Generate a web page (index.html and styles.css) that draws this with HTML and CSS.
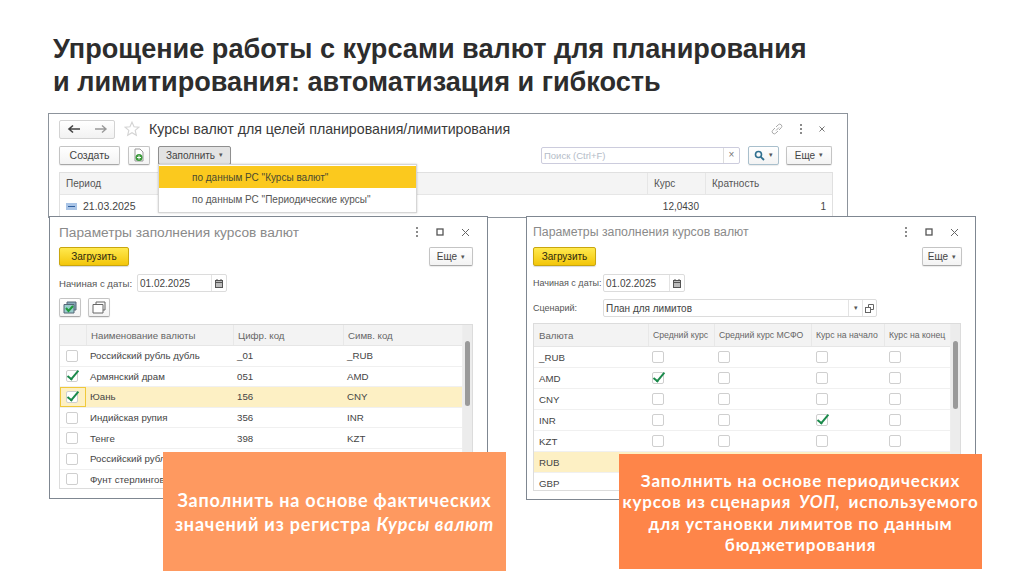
FILE: index.html
```html
<!DOCTYPE html>
<html lang="ru">
<head>
<meta charset="utf-8">
<title>Курсы валют</title>
<link rel="stylesheet" href="styles.css">
</head>
<body>
<div class="slide">
  <h1 class="heading">Упрощение работы с курсами валют для планирования<br>и лимитирования: автоматизация и гибкость</h1>

  <section class="win win-main">
    <div class="main-top">
      <div class="nav">
        <svg width="14" height="10" viewBox="0 0 14 10"><path d="M13 5H3M6 1.500 2 5l4 3.500" fill="none" stroke="#444" stroke-width="1.600"/></svg>
        <svg width="14" height="10" viewBox="0 0 14 10"><path d="M1 5h10M8 1.500 12 5 8 8.500" fill="none" stroke="#999" stroke-width="1.400"/></svg>
      </div>
      <svg class="star" width="16" height="16" viewBox="0 0 14 14"><path d="M7 1l1.800 4 4.200.4-3.200 2.800 1 4.300L7 10.200 3.200 12.500l1-4.300L1 5.400l4.200-.4z" fill="#fff" stroke="#d4d4d4"/></svg>
      <div class="main-title">Курсы валют для целей планирования/лимитирования</div>
      <div class="win-icons">
        <svg width="14" height="14" viewBox="0 0 14 14"><path d="M6 8.500 9 5.500M5 6 2.800 8.200a2 2 0 0 0 3 3L8 9M6 5l2.200-2.200a2 2 0 0 1 3 3L9 8" fill="none" stroke="#aaa"/></svg>
        <svg width="4" height="12" viewBox="0 0 4 12"><path d="M2 1v2M2 5v2M2 9v2" stroke="#666" stroke-width="1.500"/></svg>
        <svg width="8" height="8" viewBox="0 0 8 8"><path d="M1.500 1.500l5 5M6.500 1.500l-5 5" stroke="#777"/></svg>
      </div>
    </div>
    <div class="main-actions">
      <button class="btn btn-create">Создать</button>
      <button class="btn btn-file">
        <svg width="12" height="14" viewBox="0 0 12 14"><path d="M2 1h5l3 3v9H2z" fill="#fff" stroke="#999"/><circle cx="6" cy="9.500" r="3.500" fill="#3c9a3c"/><path d="M6 7.500v4M4 9.500h4" stroke="#fff"/></svg>
      </button>
      <button class="btn btn-fill">Заполнить <span class="caret">▾</span></button>
      <div class="search">
        <span class="search-text">Поиск (Ctrl+F)</span>
        <span class="search-x">×</span>
      </div>
      <button class="btn btn-find">
        <svg width="11" height="11" viewBox="0 0 11 11"><circle cx="4.500" cy="4.500" r="3" fill="none" stroke="#2f6f8f" stroke-width="1.600"/><path d="M6.800 6.800 10 10" stroke="#2f6f8f" stroke-width="1.800"/></svg>
        <span class="caret">▾</span>
      </button>
      <button class="btn btn-more-main">Еще <span class="caret">▾</span></button>
    </div>
    <div class="main-table">
      <div class="main-row main-head">
        <span class="cell cell-period">Период</span>
        <span class="cell cell-rate">Курс</span>
        <span class="cell cell-mult">Кратность</span>
      </div>
      <div class="main-row main-data">
        <span class="cell cell-period">
          <svg width="11" height="7" viewBox="0 0 11 7"><rect width="11" height="7" fill="#a9c4e6"/><path d="M2 3.500h7" stroke="#2d5d9e"/></svg>
          <span class="period-date">21.03.2025</span>
        </span>
        <span class="cell cell-rate num">12,0430</span>
        <span class="cell cell-mult num">1</span>
      </div>
    </div>
  </section>

  <div class="menu">
    <div class="menu-item menu-active">по данным РС "Курсы валют"</div>
    <div class="menu-item">по данным РС "Периодические курсы"</div>
  </div>

  <section class="win win-left">
    <div class="dlg-head">
      <span class="dlg-title dlg-title-l">Параметры заполнения курсов валют</span>
      <span class="dlg-icons">
        <svg width="4" height="10" viewBox="0 0 4 10"><path d="M2 0v2M2 4v2M2 8v2" stroke="#666" stroke-width="1.500"/></svg>
        <svg width="8" height="8" viewBox="0 0 8 8"><rect x="1" y="1" width="6" height="6" fill="none" stroke="#555" stroke-width="1.300"/></svg>
        <svg width="9" height="9" viewBox="0 0 9 9"><path d="M1 1l7 7M8 1 1 8" stroke="#666"/></svg>
      </span>
    </div>
    <div class="dlg-bar">
      <button class="btn-load btn-load-l">Загрузить</button>
      <button class="btn btn-more btn-more-l">Еще <span class="caret">▾</span></button>
    </div>
    <div class="field-row">
      <span class="label label-l">Начиная с даты:</span>
      <span class="date date-l"><span class="date-val">01.02.2025</span><span class="date-ico"><svg width="8" height="9" viewBox="0 0 8 9"><rect x=".5" y="1.500" width="7" height="7" fill="#bbb" stroke="#555"/><path d="M.5 3.500h7M2 0v2M6 0v2" stroke="#555"/></svg></span></span>
    </div>
    <div class="tool-row">
      <button class="btn btn-sq"><svg width="14" height="13" viewBox="0 0 14 13"><path d="M4 1h9v8H4z" fill="#8ab" stroke="#567"/><path d="M1 3.500h10v8.500H1z" fill="#9cc" stroke="#567"/><path d="M3 7l2.500 3L10 5" fill="none" stroke="#1d9a3c" stroke-width="2"/></svg></button>
      <button class="btn btn-sq"><svg width="14" height="13" viewBox="0 0 14 13"><path d="M4 3V1h9v8h-2" fill="none" stroke="#666"/><path d="M1 3.500h10V12H1z" fill="#fff" stroke="#666"/></svg></button>
    </div>
    <div class="tbl tbl-l">
      <div class="tbl-body">
        <div class="row-l row-head"><span class="th"></span><span class="th">Наименование валюты</span><span class="th">Цифр. код</span><span class="th">Симв. код</span></div>
        <div class="row-l"><span class="cb-cell"><i class="cb"></i></span><span>Российский рубль дубль</span><span>_01</span><span>_RUB</span></div>
        <div class="row-l"><span class="cb-cell"><i class="cb on"></i></span><span>Армянский драм</span><span>051</span><span>AMD</span></div>
        <div class="row-l row-sel"><span class="cb-cell cb-focus"><i class="cb on"></i></span><span>Юань</span><span>156</span><span>CNY</span></div>
        <div class="row-l"><span class="cb-cell"><i class="cb"></i></span><span>Индийская рупия</span><span>356</span><span>INR</span></div>
        <div class="row-l"><span class="cb-cell"><i class="cb"></i></span><span>Тенге</span><span>398</span><span>KZT</span></div>
        <div class="row-l"><span class="cb-cell"><i class="cb"></i></span><span>Российский рубль</span></div>
        <div class="row-l"><span class="cb-cell"><i class="cb"></i></span><span>Фунт стерлингов</span></div>
      </div>
      <div class="scroll"><i class="thumb"></i></div>
    </div>
  </section>

  <section class="win win-right">
    <div class="dlg-head">
      <span class="dlg-title dlg-title-r">Параметры заполнения курсов валют</span>
      <span class="dlg-icons">
        <svg width="4" height="10" viewBox="0 0 4 10"><path d="M2 0v2M2 4v2M2 8v2" stroke="#666" stroke-width="1.500"/></svg>
        <svg width="8" height="8" viewBox="0 0 8 8"><rect x="1" y="1" width="6" height="6" fill="none" stroke="#555" stroke-width="1.300"/></svg>
        <svg width="9" height="9" viewBox="0 0 9 9"><path d="M1 1l7 7M8 1 1 8" stroke="#666"/></svg>
      </span>
    </div>
    <div class="dlg-bar">
      <button class="btn-load btn-load-r">Загрузить</button>
      <button class="btn btn-more btn-more-r">Еще <span class="caret">▾</span></button>
    </div>
    <div class="field-row">
      <span class="label label-r">Начиная с даты:</span>
      <span class="date date-r"><span class="date-val">01.02.2025</span><span class="date-ico"><svg width="8" height="9" viewBox="0 0 8 9"><rect x=".5" y="1.500" width="7" height="7" fill="#bbb" stroke="#555"/><path d="M.5 3.500h7M2 0v2M6 0v2" stroke="#555"/></svg></span></span>
    </div>
    <div class="field-row field-scen">
      <span class="label label-r">Сценарий:</span>
      <span class="scen"><span class="scen-val">План для лимитов</span><span class="scen-btn"><span class="caret">▾</span></span><span class="scen-btn"><svg width="9" height="9" viewBox="0 0 9 9"><path d="M3.500 3V.5h5v5H6" fill="none" stroke="#666"/><rect x=".5" y="3.500" width="5" height="5" fill="none" stroke="#666"/></svg></span></span>
    </div>
    <div class="tbl tbl-r">
      <div class="tbl-body">
        <div class="row-r row-head"><span class="th">Валюта</span><span class="th th-mid">Средний курс</span><span class="th th-mid">Средний курс МСФО</span><span class="th th-mid">Курс на начало</span><span class="th th-mid">Курс на конец</span></div>
        <div class="row-r"><span>_RUB</span><span class="c1"><i class="cb"></i></span><span class="c1"><i class="cb"></i></span><span class="c1"><i class="cb"></i></span><span class="c1"><i class="cb"></i></span></div>
        <div class="row-r"><span>AMD</span><span class="c1"><i class="cb on"></i></span><span class="c1"><i class="cb"></i></span><span class="c1"><i class="cb"></i></span><span class="c1"><i class="cb"></i></span></div>
        <div class="row-r"><span>CNY</span><span class="c1"><i class="cb"></i></span><span class="c1"><i class="cb"></i></span><span class="c1"><i class="cb"></i></span><span class="c1"><i class="cb"></i></span></div>
        <div class="row-r"><span>INR</span><span class="c1"><i class="cb"></i></span><span class="c1"><i class="cb"></i></span><span class="c1"><i class="cb on"></i></span><span class="c1"><i class="cb"></i></span></div>
        <div class="row-r"><span>KZT</span><span class="c1"><i class="cb"></i></span><span class="c1"><i class="cb"></i></span><span class="c1"><i class="cb"></i></span><span class="c1"><i class="cb"></i></span></div>
        <div class="row-r row-sel"><span>RUB</span></div>
        <div class="row-r"><span>GBP</span></div>
      </div>
      <div class="scroll"><i class="thumb thumb-r"></i></div>
    </div>
  </section>

  <aside class="note note-left"><p class="note-text">Заполнить на основе фактических<br>значений из регистра <em>Курсы валют</em></p></aside>
  <aside class="note note-right"><p class="note-text">Заполнить на основе периодических<br>курсов из сценария <em>УОП,</em> используемого<br>для установки лимитов по данным<br>бюджетирования</p></aside>
</div>
</body>
</html>
```

FILE: styles.css
```css
* { box-sizing: border-box; }
html, body { margin: 0; padding: 0; background: #fff; }
body { font-family: "Liberation Sans", Arial, sans-serif; color: #3c3c3c; }
button { font-family: inherit; margin: 0; padding: 0; }
i { display: block; }
.slide { position: relative; width: 1024px; height: 574px; overflow: hidden; background: #fff; }

.heading { position: absolute; left: 53px; top: 32px; margin: 0; font-size: 27.100px; line-height: 33px; font-weight: 700; color: #2d2d2d; white-space: nowrap; }

.win { position: absolute; background: #fff; border: 1.500px solid #7f8791; display: flex; flex-direction: column; }
.win-main { left: 48px; top: 113px; width: 800px; height: 105px; padding: 5px 15px 0 10px; border-color: #8d949c; overflow: hidden; }
.win-left { left: 49px; top: 216px; width: 439px; height: 283px; padding: 0 14px 0 9px; }
.win-right { left: 526px; top: 216px; width: 450px; height: 284px; padding: 0 13px 0 6px; }

.btn { display: flex; align-items: center; justify-content: center; gap: 4px; height: 19px; background: linear-gradient(#fff, #f3f3f3); border: 1px solid #c4c4c4; border-bottom-color: #a8a8a8; border-radius: 2px; font-size: 10px; color: #444; box-shadow: 0 1px 1px rgba(0,0,0,.08); }
.caret { font-size: 7px; color: #555; }

.main-top { display: flex; align-items: center; height: 20px; }
.nav { display: flex; align-items: center; justify-content: space-around; width: 56px; height: 19px; background: linear-gradient(#fff, #f2f2f2); border: 1px solid #d3d3d3; border-radius: 2px; }
.star { margin-left: 9px; }
.main-title { margin-left: 9px; font-size: 14.200px; color: #3a3a3a; }
.win-icons { margin-left: auto; display: flex; align-items: center; gap: 15px; padding-right: 6px; }

.main-actions { display: flex; align-items: center; margin-top: 6px; height: 20px; }
.btn-create { width: 61px; font-size: 10.500px; }
.btn-file { width: 22px; margin-left: 8px; }
.btn-fill { width: 73px; margin-left: 8px; background: #e3e3e3; border: 1.500px solid #8f8f8f; }
.search { display: flex; align-items: center; justify-content: space-between; width: 199px; height: 17px; margin-left: 310px; border: 1px solid #ccd; border-radius: 2px; padding-left: 2px; }
.search-text { font-size: 9.500px; color: #b4bcc8; }
.search-x { width: 16px; height: 100%; border-left: 1px solid #ddd; text-align: center; font-size: 10px; color: #777; line-height: 14px; }
.btn-find { width: 31px; margin-left: 8px; border-color: #a9bfcc; }
.btn-more-main { width: 46px; margin-left: 7px; }

.main-table { margin-top: 7px; width: 774px; border: 1px solid #e0e0e0; border-bottom: 0; font-size: 10px; }
.main-row { display: grid; grid-template-columns: 587px 58px 1fr; align-items: center; }
.main-head { height: 22px; background: #f4f4f4; border-bottom: 1px solid #e6e6e6; color: #555; }
.main-data { height: 22px; color: #444; }
.cell { padding: 0 6px; }
.main-head .cell-rate, .main-head .cell-mult { border-left: 1px solid #e6e6e6; height: 100%; display: flex; align-items: center; }
.cell-period { display: flex; align-items: center; gap: 6px; }
.period-date { font-size: 10.500px; }
.num { text-align: right; }

.menu { position: absolute; left: 158px; top: 164px; width: 259px; height: 49px; background: #fff; border: 1px solid #d6d6d6; box-shadow: 0 0 2px rgba(0,0,0,.2); font-size: 10px; color: #555; padding-top: 1px; }
.menu-item { height: 23px; padding-left: 33px; display: flex; align-items: center; }
.menu-active { background: #fbc91e; color: #4a4a30; height: 22px; }

.dlg-head { display: flex; align-items: center; justify-content: space-between; height: 30px; }
.dlg-title { color: #8a8a8a; white-space: nowrap; }
.dlg-title-l { font-size: 13.700px; }
.dlg-title-r { font-size: 12.300px; }
.dlg-icons { display: flex; align-items: center; gap: 17px; padding-right: 3px; }
.dlg-bar { display: flex; justify-content: space-between; align-items: center; height: 19px; }
.btn-load { height: 19px; background: linear-gradient(#ffe94e, #f3c60a); border: 1px solid #c9a60e; border-radius: 2px; font-size: 10px; color: #2e2a10; box-shadow: 0 1px 1px rgba(0,0,0,.15); }
.btn-load-l { width: 70px; }
.btn-load-r { width: 63px; }
.btn-more-l { width: 44px; }
.btn-more-r { width: 40px; }

.field-row { display: flex; align-items: center; height: 18px; margin-top: 8px; }
.field-scen { margin-top: 7px; }
.label { color: #555; white-space: nowrap; }
.label-l { width: 78px; font-size: 9.600px; }
.label-r { width: 70px; font-size: 9px; }
.date, .scen { display: flex; height: 18px; border: 1px solid #dcdcdc; border-radius: 2px; font-size: 10px; }
.date-l { width: 90px; }
.date-r { width: 82px; }
.date-val, .scen-val { flex: 1; padding-left: 2px; display: flex; align-items: center; color: #444; }
.date-ico { width: 15px; border-left: 1px solid #e3e3e3; display: flex; align-items: center; justify-content: center; }
.scen { width: 274px; }
.scen-btn { width: 14px; border-left: 1px solid #e3e3e3; display: flex; align-items: center; justify-content: center; }

.tool-row { display: flex; gap: 7px; margin-top: 6px; }
.btn-sq { width: 22px; height: 19px; }

.tbl { display: flex; border: 1px solid #dcdcdc; font-size: 9.700px; }
.tbl-l { width: 414px; height: 165px; margin-top: 7px; }
.tbl-r { width: 428px; height: 168px; margin-top: 6px; }
.tbl-body { flex: 1; min-width: 0; overflow: hidden; }
.scroll { position: relative; width: 10px; background: #ececec; border-left: 1px solid #eee; }
.thumb { position: absolute; left: 2px; top: 16px; width: 5px; height: 65px; background: #9a9a9a; border-radius: 3px; }
.thumb-r { top: 17px; height: 68px; }

.row-l, .row-r { display: grid; align-items: center; height: 20.600px; border-bottom: 1px solid #f0f0f0; color: #444; white-space: nowrap; }
.row-l { grid-template-columns: 26px 147px 110px 1fr; }
.row-r { grid-template-columns: 114px 66px 97px 73px 1fr; height: 21px; }
.row-l > span:nth-child(n+2) { padding-left: 4px; }
.row-r > span:first-child { padding-left: 5px; }
.row-head { height: 21px; background: #f3f3f3; color: #666; border-bottom: 1px solid #e6e6e6; }
.row-r.row-head { height: 23px; }
.th { display: flex; align-items: center; height: 100%; border-left: 1px solid #e8e8e8; }
.th:first-child { border-left: 0; }
.th-mid { padding-left: 4px; font-size: 8.700px; }
.row-sel { background: #fdf0c4; }
.cb-cell { display: flex; align-items: center; justify-content: center; height: 100%; padding-right: 3px; }
.cb-focus { border: 1px solid #f0c93a; }
.c1 { display: flex; justify-content: flex-start; padding-left: 4px; }
.row-r .c1:nth-child(4), .row-r .c1:nth-child(5) { padding-left: 5px; }
.cb { position: relative; width: 12px; height: 12px; background: #fff; border: 1px solid #cfcfcf; border-radius: 2px; }
.cb.on::after { content: ""; position: absolute; left: 3px; top: -3px; width: 4px; height: 10px; border: solid #1b8a4b; border-width: 0 2px 2px 0; transform: rotate(40deg); }

.note { position: absolute; display: flex; align-items: center; justify-content: center; text-align: center; color: #fff; font-family: Lato, "Open Sans", sans-serif; font-weight: 700; white-space: nowrap; }
.note-text { margin: 0; }
.note-text em { font-style: italic; }
.note-left { left: 163px; top: 452px; width: 343px; height: 119px; background: #fe9960; font-size: 18px; line-height: 24px; letter-spacing: .8px; }
.note-right { left: 619px; top: 454px; width: 363px; height: 115px; padding-top: 2px; background: #fe8549; font-size: 17px; line-height: 21.500px; letter-spacing: .8px; }
.note-right em { margin: 0 3px; }
```
